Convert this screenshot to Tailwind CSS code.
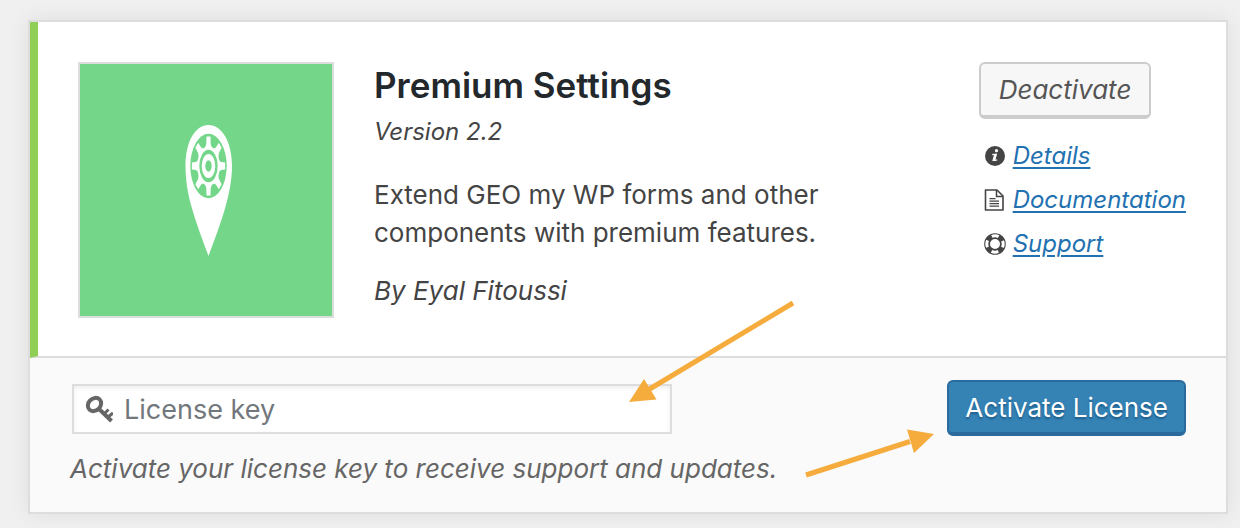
<!DOCTYPE html>
<html lang="en">
	<head>
		<meta charset="UTF-8" />
		<meta name="viewport" content="width=device-width, initial-scale=1.0" />
		<title>Premium Settings</title>
		<script src="https://cdn.jsdelivr.net/npm/@tailwindcss/browser@4"></script>
	</head>
	<body class="bg-[#f0f0f0] text-[#444] font-['Inter','Liberation_Sans',sans-serif] text-[26px]">
		<main class="pt-5 pb-3.5 pl-7 pr-3">
			<article class="border-2 border-[#ddd] bg-white shadow-[0_0_20px_rgba(0,0,0,0.08)]">
				<!-- Extension details -->
				<div class="flex items-start gap-10 border-l-8 border-l-[#90ce56] border-b-2 border-b-[#ddd] px-10 pt-10 pb-[38px]">
					<div class="size-64 shrink-0 border-2 border-[#ddd] bg-[#73d689]">
						<svg class="size-full" viewBox="0 0 252 252" aria-hidden="true">
							<path d="M128.500 61C142 61 152 78 152 102C152 116 149 130 146 141C141 159 134 177 128.500 192C123 177 116 159 111 141C108 130 105.500 116 105.500 102C105.500 78 115 61 128.500 61Z" fill="#fff" />
							<g transform="translate(128.500 102) scale(1 1.770)">
								<circle r="18.200" fill="#73d689" />
								<g fill="#fff">
									<circle r="11.200" />
									<path id="tooth" d="M-3.600 -10L-2.200 -12.500L-2 -16.600H2L2.200 -12.500L3.600 -10Z" />
									<use href="#tooth" transform="rotate(45)" />
									<use href="#tooth" transform="rotate(90)" />
									<use href="#tooth" transform="rotate(135)" />
									<use href="#tooth" transform="rotate(180)" />
									<use href="#tooth" transform="rotate(225)" />
									<use href="#tooth" transform="rotate(270)" />
									<use href="#tooth" transform="rotate(315)" />
								</g>
								<circle r="9.200" fill="#73d689" />
								<circle r="5" fill="none" stroke="#fff" stroke-width="3.600" />
							</g>
						</svg>
					</div>

					<div class="min-w-0 flex-1">
						<h2 class="text-[35px] leading-[46px] font-semibold text-[#23282d]">Premium Settings</h2>
						<p class="mt-1 text-2xl leading-10 italic">Version 2.2</p>
						<p class="mt-6 max-w-[480px] leading-[38px]">Extend GEO my WP forms and other components with premium features.</p>
						<p class="mt-5 leading-[38px] italic">By Eyal Fitoussi</p>
					</div>

					<div class="shrink-0 italic">
						<button type="button" class="h-[57px] rounded-md border-2 border-b-4 border-[#ccc] bg-[#f7f7f7] px-[18px] text-[#555] italic">Deactivate</button>
						<ul class="mt-[15px] text-2xl leading-[44px] text-[#2271b1]">
							<li class="flex items-center gap-[7px] pl-[5px]">
								<svg class="size-[22px] text-[#444]" viewBox="0 0 22 22" aria-hidden="true">
									<circle cx="11" cy="11" r="10" fill="currentColor" />
									<circle cx="12.500" cy="5.700" r="1.600" fill="#fff" />
									<path d="M8.200 9.700L12.300 9.200L10.600 15.300Q10.500 16 13.200 14.700" fill="none" stroke="#fff" stroke-width="1.200" />
									<path d="M10 9.700H12.600L10.900 16H8.300Z" fill="#fff" />
								</svg>
								<a href="#" class="underline decoration-2 underline-offset-3">Details</a>
							</li>
							<li class="flex items-center gap-[7px] pl-[5px]">
								<svg class="size-[22px] text-[#444]" viewBox="0 0 22 22" fill="none" stroke="currentColor" aria-hidden="true">
									<path d="M1.500 1H13L19 7V21H1.500Z" stroke-width="1.600" stroke-linejoin="round" />
									<path d="M12.500 1V7.500H19" stroke-width="1.500" />
									<path d="M5.500 9.700H11.500M5.500 12.200H15M5.500 14.700H15M5.500 17.200H15" stroke-width="1.300" />
								</svg>
								<a href="#" class="underline decoration-2 underline-offset-3">Documentation</a>
							</li>
							<li class="flex items-center gap-[7px] pl-[5px]">
								<svg class="size-[22px] text-[#444]" viewBox="0 0 22 22" fill="none" aria-hidden="true">
									<circle cx="11" cy="11" r="7.900" stroke="currentColor" stroke-width="5.800" />
									<circle cx="11" cy="11" r="8.200" stroke="#fff" stroke-width="3" stroke-dasharray="7 5.880" stroke-dashoffset="3.500" />
								</svg>
								<a href="#" class="underline decoration-2 underline-offset-3">Support</a>
							</li>
						</ul>
					</div>
				</div>

				<!-- License form -->
				<form class="flex items-start justify-between gap-10 bg-[#fafafa] pt-[22px] pr-10 pb-6 pl-10">
					<div class="min-w-0 flex-1 pt-1">
						<div class="relative ml-0.5 max-w-[600px]">
							<label for="license-key" class="absolute top-[11px] left-[13px] text-[#666]" aria-label="License key">
								<svg class="size-7" viewBox="0 0 28 28" fill="none" stroke="currentColor" aria-hidden="true">
									<ellipse cx="9.500" cy="9.500" rx="7.200" ry="6" transform="rotate(-45 9.500 9.500)" stroke-width="4" />
									<path d="M13.500 13.500L26.500 26" stroke-width="4" />
									<path d="M19.500 18.500L23.500 14.500M23 22L28 18" stroke-width="3" />
								</svg>
							</label>
							<input id="license-key" type="text" placeholder="License key" class="h-[50px] w-full border-2 border-[#ddd] bg-white pr-4 pl-[50px] text-[27px] shadow-[inset_0_2px_4px_rgba(0,0,0,0.07)] placeholder:text-[#72777c]" />
							<svg class="pointer-events-none absolute -top-[84px] -right-[124px] h-[104px] w-[168px]" viewBox="0 0 168 104" aria-hidden="true">
								<path d="M165 3L20 90" stroke="#f5ac3c" stroke-width="5" />
								<path d="M1 102L16 79L28.500 99.500Z" fill="#f5ac3c" />
							</svg>
						</div>
						<p class="mt-4 leading-[38px] text-[#666] italic">Activate your license key to receive support and updates.</p>
					</div>
					<div class="relative shrink-0">
						<button type="submit" class="h-14 rounded-md border-2 border-b-4 border-[#2a6a9c] bg-[#3582b5] px-4 text-white text-shadow-[0_2px_2px_#1d5c88]">Activate License</button>
						<svg class="pointer-events-none absolute top-12 right-[250px] h-[52px] w-[132px]" viewBox="0 0 132 52" aria-hidden="true">
							<path d="M2 47L106 13.500" stroke="#f5ac3c" stroke-width="5" />
							<path d="M130 6L103 1.500L110 25Z" fill="#f5ac3c" />
						</svg>
					</div>
				</form>
			</article>
		</main>
	</body>
</html>
